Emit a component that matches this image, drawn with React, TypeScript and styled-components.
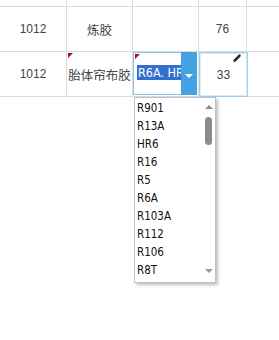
import React from "react";
import styled, { createGlobalStyle } from "styled-components";

const GlobalStyle = createGlobalStyle`
  html, body {
    margin: 0;
    padding: 0;
    background: #ffffff;
    overflow: hidden;
  }
  body {
    font-family: "Liberation Sans", "Noto Sans CJK SC", sans-serif;
  }
`;

const options = [
  "R901",
  "R13A",
  "HR6",
  "R16",
  "R5",
  "R6A",
  "R103A",
  "R112",
  "R106",
  "R8T",
];

const rows = [
  { code: "", name: "", spec: "", qty: "" },
  { code: "1012", name: "炼胶", spec: "", qty: "76" },
  { code: "1012", name: "胎体帘布胶", spec: "", qty: "33", marked: true },
];

const Sheet = styled.div`
  position: relative;
  width: 279px;
  height: 340px;
`;

const Grid = styled.div`
  display: grid;
  grid-template-columns: 67px 66px 66px 48px 1fr;
  grid-template-rows: 7px 45px 45px;
`;

const Cell = styled.div<{ $open?: boolean }>`
  position: relative;
  display: flex;
  align-items: center;
  justify-content: center;
  border-right: ${(p) => (p.$open ? "none" : "1px solid #dcdcdc")};
  border-bottom: 1px solid #dcdcdc;
  color: #444444;
  font-size: 12px;
  white-space: nowrap;
  overflow: hidden;
`;

const CjkText = styled.span`
  font-family: "Noto Sans CJK SC", sans-serif;
  font-size: 12.5px;
  color: #444444;
`;

const Flag = styled.span`
  position: absolute;
  top: 1px;
  left: 1px;
  width: 0;
  height: 0;
  border-top: 5px solid #9e1027;
  border-right: 5px solid transparent;
`;

const SelectEditor = styled.div`
  position: absolute;
  left: 133px;
  top: 52px;
  width: 64px;
  height: 43px;
  display: flex;
`;

const SelectInput = styled.div`
  position: relative;
  flex: 1;
  border: 1px solid #8cc4e8;
  border-right: none;
  background: #ffffff;
  display: flex;
  align-items: center;
  padding-left: 3px;
  padding-bottom: 2px;
  overflow: hidden;
  white-space: nowrap;
`;

const Selected = styled.span`
  background: #3270d0;
  color: #ffffff;
  font-family: "DejaVu Sans Condensed", "DejaVu Sans", sans-serif;
  font-size: 12.5px;
  line-height: 15px;
  padding-left: 1px;
`;

const DropButton = styled.div`
  width: 16px;
  background: #45a2e2;
  display: flex;
  align-items: center;
  justify-content: center;
  padding-top: 4px;
  box-sizing: border-box;
`;

const ArrowDown = styled.span<{ $color: string; $w: number }>`
  width: 0;
  height: 0;
  border-left: ${(p) => p.$w}px solid transparent;
  border-right: ${(p) => p.$w}px solid transparent;
  border-top: ${(p) => p.$w}px solid ${(p) => p.$color};
`;

const ArrowUp = styled.span<{ $color: string; $w: number }>`
  width: 0;
  height: 0;
  border-left: ${(p) => p.$w}px solid transparent;
  border-right: ${(p) => p.$w}px solid transparent;
  border-bottom: ${(p) => p.$w}px solid ${(p) => p.$color};
`;

const EditCell = styled.div`
  position: absolute;
  left: 199px;
  top: 52px;
  width: 49px;
  height: 45px;
  box-sizing: border-box;
  border: 1px solid #9fd0ee;
  box-shadow: inset 0 0 0 1px #d4ecf9;
  background: #ffffff;
  display: flex;
  align-items: center;
  justify-content: center;
  color: #444444;
  font-size: 12px;
`;

const Pencil = styled.svg`
  position: absolute;
  top: 1px;
  right: 5px;
`;

const Dropdown = styled.div`
  position: absolute;
  left: 134px;
  top: 97px;
  width: 82px;
  height: 186px;
  box-sizing: border-box;
  background: #ffffff;
  border: 1px solid #b9c3cf;
  box-shadow: 2px 2px 3px rgba(0, 0, 0, 0.25);
  display: flex;
`;

const OptionList = styled.ul`
  list-style: none;
  margin: 0;
  padding: 1px 0 0;
  flex: 1;
`;

const Option = styled.li`
  height: 18px;
  line-height: 18px;
  padding-left: 2px;
  font-family: "DejaVu Sans Condensed", "DejaVu Sans", sans-serif;
  font-size: 11.5px;
  color: #111111;
`;

const ScrollBar = styled.div`
  width: 13px;
  display: flex;
  flex-direction: column;
  align-items: center;
  padding: 7px 0 9px;
  box-sizing: border-box;
`;

const Thumb = styled.div`
  width: 7px;
  height: 28px;
  margin-top: 8px;
  border-radius: 4px;
  background: #8c8c8c;
`;

const Spacer = styled.div`
  flex: 1;
`;

export default function App() {
  return (
    <>
      <GlobalStyle />
      <Sheet>
        <Grid>
          {rows.map((r, i) => (
            <React.Fragment key={i}>
              <Cell>{r.code}</Cell>
              <Cell>
                {r.marked && <Flag />}
                <CjkText>{r.name}</CjkText>
              </Cell>
              <Cell>{r.spec}</Cell>
              <Cell>{r.marked ? "" : r.qty}</Cell>
              <Cell $open />
            </React.Fragment>
          ))}
        </Grid>

        <SelectEditor>
          <SelectInput>
            <Flag />
            <Selected>R6A. HR6</Selected>
          </SelectInput>
          <DropButton>
            <ArrowDown $color="#ffffff" $w={4} />
          </DropButton>
        </SelectEditor>

        <EditCell>
          <Pencil width="10" height="10" viewBox="0 0 10 10">
            <path d="M1.5 8.5 L2.5 6.5 L7.5 1.5 L8.5 2.5 L3.5 7.5 Z" fill="#2a2a2a" />
            <path d="M2.5 6.5 L7.5 1.5" stroke="#2a2a2a" strokeWidth="2.4" strokeLinecap="round" />
          </Pencil>
          33
        </EditCell>

        <Dropdown>
          <OptionList>
            {options.map((o) => (
              <Option key={o}>{o}</Option>
            ))}
          </OptionList>
          <ScrollBar>
            <ArrowUp $color="#8a8a8a" $w={4} />
            <Thumb />
            <Spacer />
            <ArrowDown $color="#9a9a9a" $w={4} />
          </ScrollBar>
        </Dropdown>
      </Sheet>
    </>
  );
}
